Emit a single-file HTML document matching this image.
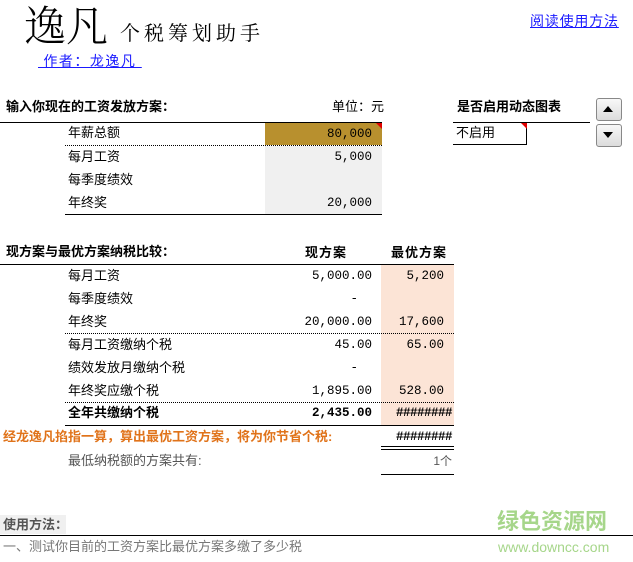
<!DOCTYPE html>
<html><head><meta charset="utf-8"><style>
body{margin:0;width:633px;height:562px;background:#fff;position:relative;overflow:hidden;font-family:"Liberation Sans","Noto Sans CJK SC",sans-serif;font-size:13px;color:#000}
.a{position:absolute;white-space:nowrap;line-height:1}
.l{position:absolute;height:0}
.n{font-family:"Liberation Mono","Noto Sans CJK SC",monospace;font-size:12.5px;text-align:right}
.b{font-weight:bold}
.fill{position:absolute}
</style></head><body>
<div class="a" style="left:24px;top:3px;font-family:'Noto Serif CJK SC',serif;font-size:42px;font-weight:300">逸凡</div>
<div class="a" style="left:120px;top:22px;font-family:'Noto Serif CJK SC',serif;font-size:20px;letter-spacing:4px">个税筹划助手</div>
<div class="a" style="left:38px;top:54px;font-size:14px;color:#1a1aff;text-decoration:underline;letter-spacing:1.5px">&nbsp;作者：龙逸凡&nbsp;</div>
<div class="a" style="left:530px;top:14px;font-size:14px;color:#1a1aff;text-decoration:underline;letter-spacing:0.8px">阅读使用方法</div>

<div class="a b" style="left:6px;top:100px">输入你现在的工资发放方案：</div>
<div class="a" style="left:332px;top:100px">单位：元</div>
<div class="l" style="left:0;top:122px;width:382px;border-top:1px solid #000"></div>
<div class="fill" style="left:265px;top:123px;width:117px;height:22px;background:#b8902e"></div>
<div class="fill" style="left:265px;top:146px;width:117px;height:68px;background:#f0f0f0"></div>
<div class="a" style="left:376px;top:123px;width:0;height:0;border-left:6px solid transparent;border-top:6px solid #e00000"></div>
<div class="l" style="left:65px;top:145px;width:317px;border-top:1px dotted #000"></div>
<div class="a" style="left:68px;top:126px">年薪总额</div>
<div class="a" style="left:68px;top:150px">每月工资</div>
<div class="a" style="left:68px;top:173px">每季度绩效</div>
<div class="a" style="left:68px;top:196px">年终奖</div>
<div class="a n" style="left:265px;width:107px;top:128px">80,000</div>
<div class="a n" style="left:265px;width:107px;top:151px">5,000</div>
<div class="a n" style="left:265px;width:107px;top:197px">20,000</div>
<div class="l" style="left:65px;top:214px;width:317px;border-top:1px solid #000"></div>

<div class="a b" style="left:457px;top:100px">是否启用动态图表</div>
<div class="l" style="left:453px;top:122px;width:137px;border-top:1px solid #000"></div>
<div class="fill" style="left:453px;top:122px;width:73px;height:22px;border-right:1px solid #000;border-bottom:1px solid #000"></div>
<div class="a" style="left:521px;top:123px;width:0;height:0;border-left:6px solid transparent;border-top:6px solid #e00000"></div>
<div class="a" style="left:456px;top:126px">不启用</div>
<div class="fill" style="left:596px;top:98px;width:24px;height:21px;border:1px solid #888;border-radius:3px;background:linear-gradient(#f8f8f8,#dcdcdc)"></div>
<div class="a" style="left:603px;top:106px;width:0;height:0;border-left:5px solid transparent;border-right:5px solid transparent;border-bottom:6px solid #000"></div>
<div class="fill" style="left:596px;top:124px;width:24px;height:21px;border:1px solid #888;border-radius:3px;background:linear-gradient(#f8f8f8,#dcdcdc)"></div>
<div class="a" style="left:603px;top:132px;width:0;height:0;border-left:5px solid transparent;border-right:5px solid transparent;border-top:6px solid #000"></div>

<div class="a b" style="left:6px;top:245px">现方案与最优方案纳税比较：</div>
<div class="a b" style="left:305px;top:246px;letter-spacing:1px">现方案</div>
<div class="a b" style="left:391px;top:246px;letter-spacing:1px">最优方案</div>
<div class="l" style="left:0;top:264px;width:454px;border-top:1px solid #000"></div>
<div class="fill" style="left:381px;top:265px;width:73px;height:160px;background:#fce4d6"></div>
<div class="a" style="left:68px;top:269px">每月工资</div>
<div class="a" style="left:68px;top:292px">每季度绩效</div>
<div class="a" style="left:68px;top:315px">年终奖</div>
<div class="a" style="left:68px;top:338px">每月工资缴纳个税</div>
<div class="a" style="left:68px;top:361px">绩效发放月缴纳个税</div>
<div class="a" style="left:68px;top:384px">年终奖应缴个税</div>
<div class="a b" style="left:68px;top:406px">全年共缴纳个税</div>
<div class="a n" style="left:250px;width:122px;top:270px">5,000.00</div>
<div class="a n" style="left:250px;width:108px;top:293px">-</div>
<div class="a n" style="left:250px;width:122px;top:316px">20,000.00</div>
<div class="a n" style="left:250px;width:122px;top:339px">45.00</div>
<div class="a n" style="left:250px;width:108px;top:362px">-</div>
<div class="a n" style="left:250px;width:122px;top:385px">1,895.00</div>
<div class="a n b" style="left:250px;width:122px;top:407px">2,435.00</div>
<div class="a n" style="left:381px;width:63px;top:270px">5,200</div>
<div class="a n" style="left:381px;width:63px;top:316px">17,600</div>
<div class="a n" style="left:381px;width:63px;top:339px">65.00</div>
<div class="a n" style="left:381px;width:63px;top:385px">528.00</div>
<div class="a n b" style="left:381px;width:71px;top:407px;letter-spacing:-0.5px">########</div>
<div class="l" style="left:65px;top:333px;width:389px;border-top:1px dotted #000"></div>
<div class="l" style="left:65px;top:402px;width:389px;border-top:1px dotted #000"></div>
<div class="l" style="left:65px;top:425px;width:389px;border-top:1px solid #000"></div>
<div class="a b" style="left:3px;top:430px;color:#e0731a">经龙逸凡掐指一算，算出最优工资方案，将为你节省个税:</div>
<div class="a n b" style="left:381px;width:71px;top:431px;letter-spacing:-0.5px">########</div>
<div class="l" style="left:381px;top:446px;width:73px;height:2px;border-top:1px solid #000;border-bottom:1px solid #000"></div>
<div class="a" style="left:68px;top:454px;color:#555">最低纳税额的方案共有:</div>
<div class="a" style="left:420px;top:455px;width:32px;text-align:right;color:#555;font-size:12px">1个</div>
<div class="l" style="left:381px;top:474px;width:73px;border-top:1px solid #000"></div>

<div class="fill" style="left:0;top:515px;width:66px;height:19px;background:#f0f0f0"></div>
<div class="a b" style="left:3px;top:518px;color:#555">使用方法：</div>
<div class="l" style="left:0;top:535px;width:633px;border-top:1px solid #000"></div>
<div class="a" style="left:3px;top:540px;color:#777">一、测试你目前的工资方案比最优方案多缴了多少税</div>
<div class="a b" style="left:497px;top:511px;font-size:22px;color:#a6d68a">绿色资源网</div>
<div class="a" style="left:498px;top:540px;font-size:14px;color:#a6d68a">www.downcc.com</div>
</body></html>
